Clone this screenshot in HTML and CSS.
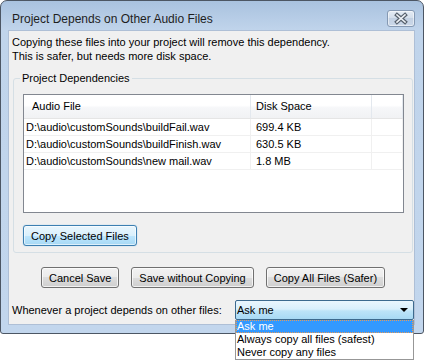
FILE: index.html
```html
<!DOCTYPE html>
<html lang="en">
<head>
    <meta charset="UTF-8">
    <meta name="viewport" content="width=device-width, initial-scale=1.0">
    <title>Project Depends on Other Audio Files</title>
    <link rel="stylesheet" href="styles.css">
</head>
<body>
    <div class="window">
        <div class="titlebar">
            <span class="title">Project Depends on Other Audio Files</span>
            <span class="close-btn">
                <svg width="26" height="15" viewBox="0 0 26 15">
                    <path d="M9 4 L17 11 M17 4 L9 11" stroke="#56606c" stroke-width="4" stroke-linecap="square"/>
                    <path d="M9 4 L17 11 M17 4 L9 11" stroke="#eef2f7" stroke-width="1.6" stroke-linecap="square"/>
                </svg>
            </span>
        </div>
        <div class="client">
            <p class="intro">Copying these files into your project will remove this dependency.<br>This is safer, but needs more disk space.</p>
            <fieldset class="group">
                <legend>Project Dependencies</legend>
                <div class="list">
                    <div class="row head">
                        <div class="cell first">Audio File</div>
                        <div class="cell">Disk Space</div>
                        <div class="cell"></div>
                    </div>
                    <div class="row">
                        <div class="cell first">D:\audio\customSounds\buildFail.wav</div>
                        <div class="cell">699.4 KB</div>
                        <div class="cell"></div>
                    </div>
                    <div class="row">
                        <div class="cell first">D:\audio\customSounds\buildFinish.wav</div>
                        <div class="cell">630.5 KB</div>
                        <div class="cell"></div>
                    </div>
                    <div class="row">
                        <div class="cell first">D:\audio\customSounds\new mail.wav</div>
                        <div class="cell">1.8 MB</div>
                        <div class="cell"></div>
                    </div>
                </div>
                <button class="btn default">Copy Selected Files</button>
            </fieldset>
            <div class="actions">
                <button class="btn">Cancel Save</button>
                <button class="btn">Save without Copying</button>
                <button class="btn">Copy All Files (Safer)</button>
            </div>
            <div class="policy">
                <span>Whenever a project depends on other files:</span>
                <div class="combo">
                    <span>Ask me</span>
                    <span class="arrow"></span>
                    <ul class="dropdown">
                        <li class="selected">Ask me</li>
                        <li>Always copy all files (safest)</li>
                        <li>Never copy any files</li>
                    </ul>
                </div>
            </div>
        </div>
    </div>
</body>
</html>
```

FILE: styles.css
```css
body {
    margin: 0;
    min-height: 361px;
    background: #fff;
    font-family: "Liberation Sans", Arial, sans-serif;
    font-size: 11px;
    color: #000;
}
.window {
    width: 424px;
    height: 334px;
    box-sizing: border-box;
    border: 1px solid #4c5664;
    border-radius: 7px 7px 3px 3px;
    background: linear-gradient(#a9c2df, #c0d4eb 29px, #c2d6ed);
    padding: 0 8px 8px 7px;
    display: flex;
    flex-direction: column;
}
.titlebar {
    height: 29px;
    display: flex;
    justify-content: space-between;
    align-items: flex-start;
}
.title {
    margin: 11px 0 0 4px;
    font-size: 12px;
    line-height: 14px;
    color: #1e1e1e;
}
.close-btn {
    margin-top: 9px;
    width: 28px;
    height: 17px;
    box-sizing: border-box;
    border: 1px solid #8599b3;
    border-radius: 3px;
    background: linear-gradient(#e4ebf4, #d3deeb 50%, #c3d1e3 50%, #cbd8e9);
    box-shadow: inset 0 0 0 1px rgba(255, 255, 255, 0.5);
    display: flex;
}
.client {
    flex: 1;
    background: #f0f0f0;
    border: 1px solid #aebfd6;
    padding: 4px 0 0 0;
}
.intro {
    margin: 0 0 8px 3px;
    line-height: 14px;
}
.group {
    margin: 0 1px 0 4px;
    border: 1px solid #d5dfe5;
    border-radius: 3px;
    padding: 9px 8px 6px 9px;
}
.group legend {
    margin-left: -3px;
    padding: 0 2px;
    line-height: 14px;
}
.list {
    height: 119px;
    box-sizing: border-box;
    border: 1px solid #828790;
    background: #fff;
}
.row {
    display: grid;
    grid-template-columns: 227px 121px 1fr;
    height: 17px;
    box-sizing: border-box;
    border-bottom: 1px solid #f0f0f0;
    line-height: 17px;
}
.row .cell {
    border-right: 1px solid #f0f0f0;
    padding-left: 5px;
    white-space: nowrap;
    overflow: hidden;
}
.row .cell.first {
    padding-left: 2px;
}
.row.head {
    height: 24px;
    line-height: 22px;
    background: linear-gradient(#fff, #fff 45%, #f6f7f9 55%, #f1f2f4);
    border-bottom: 1px solid #e5e5e5;
}
.row.head .cell {
    border-right: 1px solid #e3e8ee;
}
.row.head .cell.first {
    padding-left: 8px;
}
.btn {
    height: 21px;
    padding: 0 7px;
    font: inherit;
    color: #000;
    border: 1px solid #707070;
    border-radius: 3px;
    background: linear-gradient(#f2f2f2, #ebebeb 50%, #dddddd 50%, #cfcfcf);
    box-shadow: inset 0 0 0 1px rgba(255, 255, 255, 0.7);
}
.btn.default {
    display: block;
    margin-top: 12px;
    border-color: #3c7fb1;
    background: linear-gradient(#eaf6fd, #d9f0fc 50%, #bee6fd 50%, #a7d9f5);
    box-shadow: inset 0 0 0 1px rgba(255, 255, 255, 0.6), 0 0 1px #6ab8e8;
}
.actions {
    margin-top: 14px;
    padding-left: 3px;
    display: flex;
    justify-content: center;
    gap: 12px;
}
.policy {
    margin-top: 12px;
    padding-left: 3px;
    display: flex;
    align-items: center;
}
.combo {
    position: relative;
    margin-left: auto;
    width: 179px;
    height: 20px;
    box-sizing: border-box;
    border: 1px solid #3d6a8e;
    border-radius: 2px;
    background: linear-gradient(#eaf6fd, #d9effb 45%, #bde4f8 55%, #a7d9f4);
    display: flex;
    align-items: center;
    justify-content: space-between;
    padding: 0 5px 0 1px;
}
.arrow {
    width: 0;
    height: 0;
    border-left: 4px solid transparent;
    border-right: 4px solid transparent;
    border-top: 4px solid #000;
}
.dropdown {
    position: absolute;
    top: calc(100% + 1px);
    left: -1px;
    right: -1px;
    margin: 0;
    padding: 0;
    list-style: none;
    background: #fff;
    border: 1px solid #979797;
    border-top: 0;
    z-index: 2;
}
.dropdown li {
    height: 13px;
    box-sizing: border-box;
    line-height: 11px;
    border: 1px solid transparent;
    padding-left: 0;
}
.dropdown li.selected {
    background: #3399ff;
    color: #fff;
    border: 1px dotted #e59b5b;
}
```
